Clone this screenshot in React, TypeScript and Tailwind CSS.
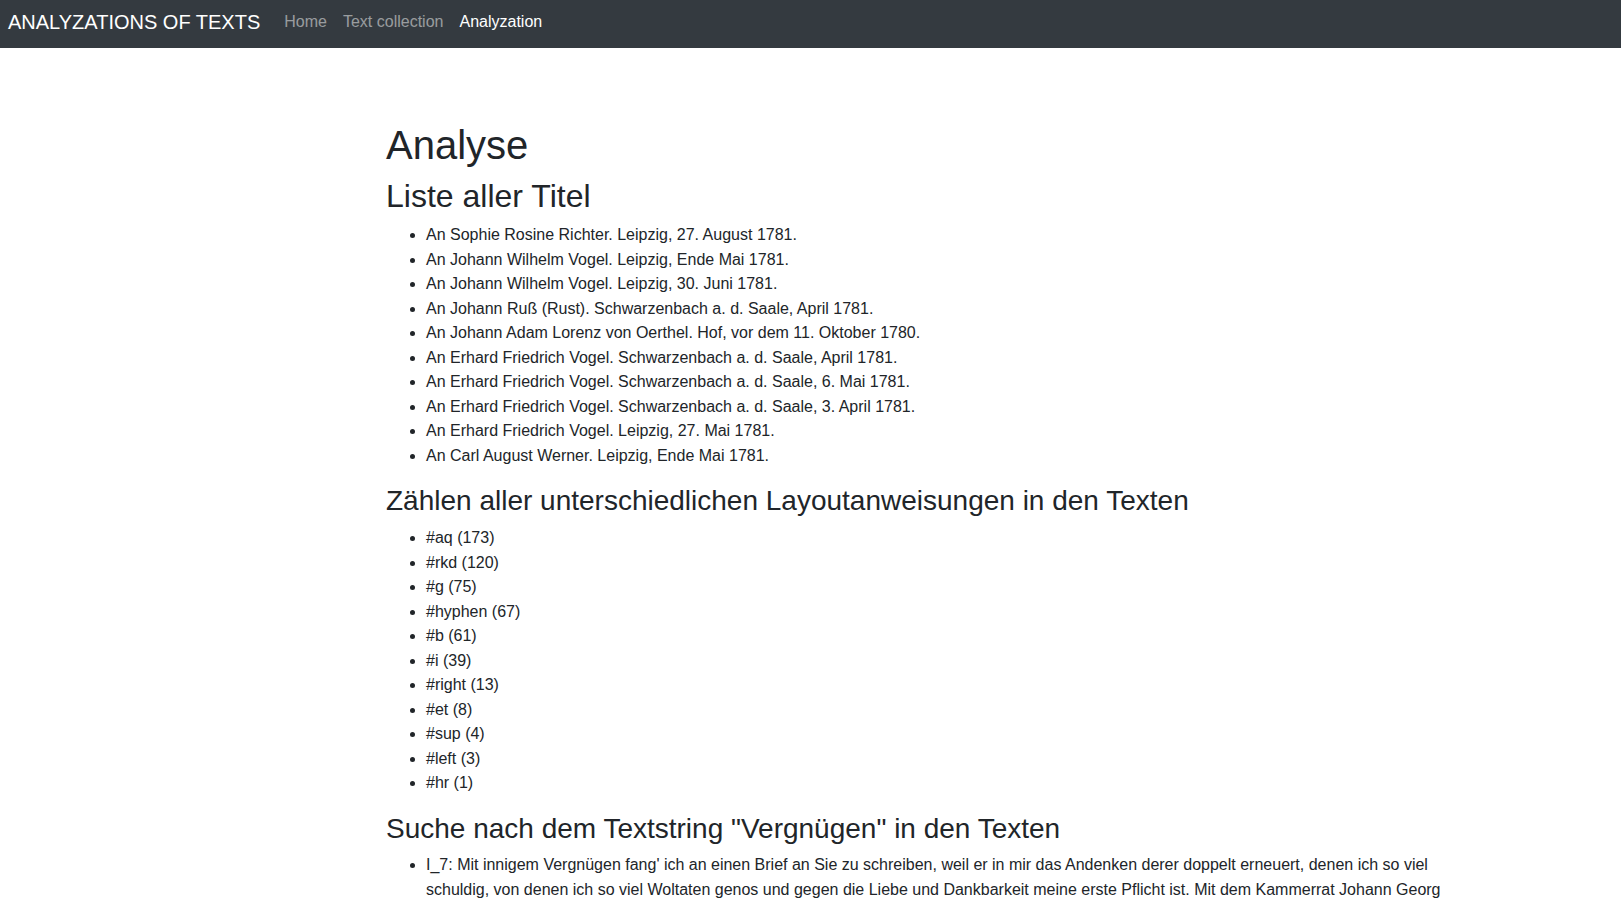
const titles = [
  "An Sophie Rosine Richter. Leipzig, 27. August 1781.",
  "An Johann Wilhelm Vogel. Leipzig, Ende Mai 1781.",
  "An Johann Wilhelm Vogel. Leipzig, 30. Juni 1781.",
  "An Johann Ruß (Rust). Schwarzenbach a. d. Saale, April 1781.",
  "An Johann Adam Lorenz von Oerthel. Hof, vor dem 11. Oktober 1780.",
  "An Erhard Friedrich Vogel. Schwarzenbach a. d. Saale, April 1781.",
  "An Erhard Friedrich Vogel. Schwarzenbach a. d. Saale, 6. Mai 1781.",
  "An Erhard Friedrich Vogel. Schwarzenbach a. d. Saale, 3. April 1781.",
  "An Erhard Friedrich Vogel. Leipzig, 27. Mai 1781.",
  "An Carl August Werner. Leipzig, Ende Mai 1781.",
];

const layouts: [string, number][] = [
  ["aq", 173],
  ["rkd", 120],
  ["g", 75],
  ["hyphen", 67],
  ["b", 61],
  ["i", 39],
  ["right", 13],
  ["et", 8],
  ["sup", 4],
  ["left", 3],
  ["hr", 1],
];

const hits = [
  "I_7: Mit innigem Vergnügen fang' ich an einen Brief an Sie zu schreiben, weil er in mir das Andenken derer doppelt erneuert, denen ich so viel schuldig, von denen ich so viel Woltaten genos und gegen die Liebe und Dankbarkeit meine erste Pflicht ist. Mit dem Kammerrat Johann Georg",
];

function NavBar() {
  return (
    <nav className="h-12 bg-[#343a40] flex items-center px-2 pb-[5px]">
      <a className="text-white text-xl mr-4">ANALYZATIONS OF TEXTS</a>
      <a className="px-2 text-white/50">Home</a>
      <a className="px-2 text-white/50">Text collection</a>
      <a className="px-2 text-white">Analyzation</a>
    </nav>
  );
}

function List({ items }: { items: string[] }) {
  return (
    <ul className="list-disc pl-10 mb-4 leading-[24.5px]">
      {items.map((t) => (
        <li key={t}>{t}</li>
      ))}
    </ul>
  );
}

export default function App() {
  return (
    <div className="min-h-screen bg-white text-[#212529] text-base font-['Liberation_Sans',Arial,sans-serif]">
      <NavBar />
      <main className="ml-[386px] w-[1085px] pt-[73px]">
        <h1 className="text-[40px] leading-[48px] mb-2">Analyse</h1>
        <h2 className="text-[32px] leading-[38.4px] mb-2">Liste aller Titel</h2>
        <List items={titles} />
        <h3 className="text-[28px] leading-[33.6px] mb-2">
          Zählen aller unterschiedlichen Layoutanweisungen in den Texten
        </h3>
        <List items={layouts.map(([k, n]) => `#${k} (${n})`)} />
        <h3 className="text-[28px] leading-[33.6px] mb-2 mt-[6px]">
          Suche nach dem Textstring "Vergnügen" in den Texten
        </h3>
        <List items={hits} />
      </main>
    </div>
  );
}
